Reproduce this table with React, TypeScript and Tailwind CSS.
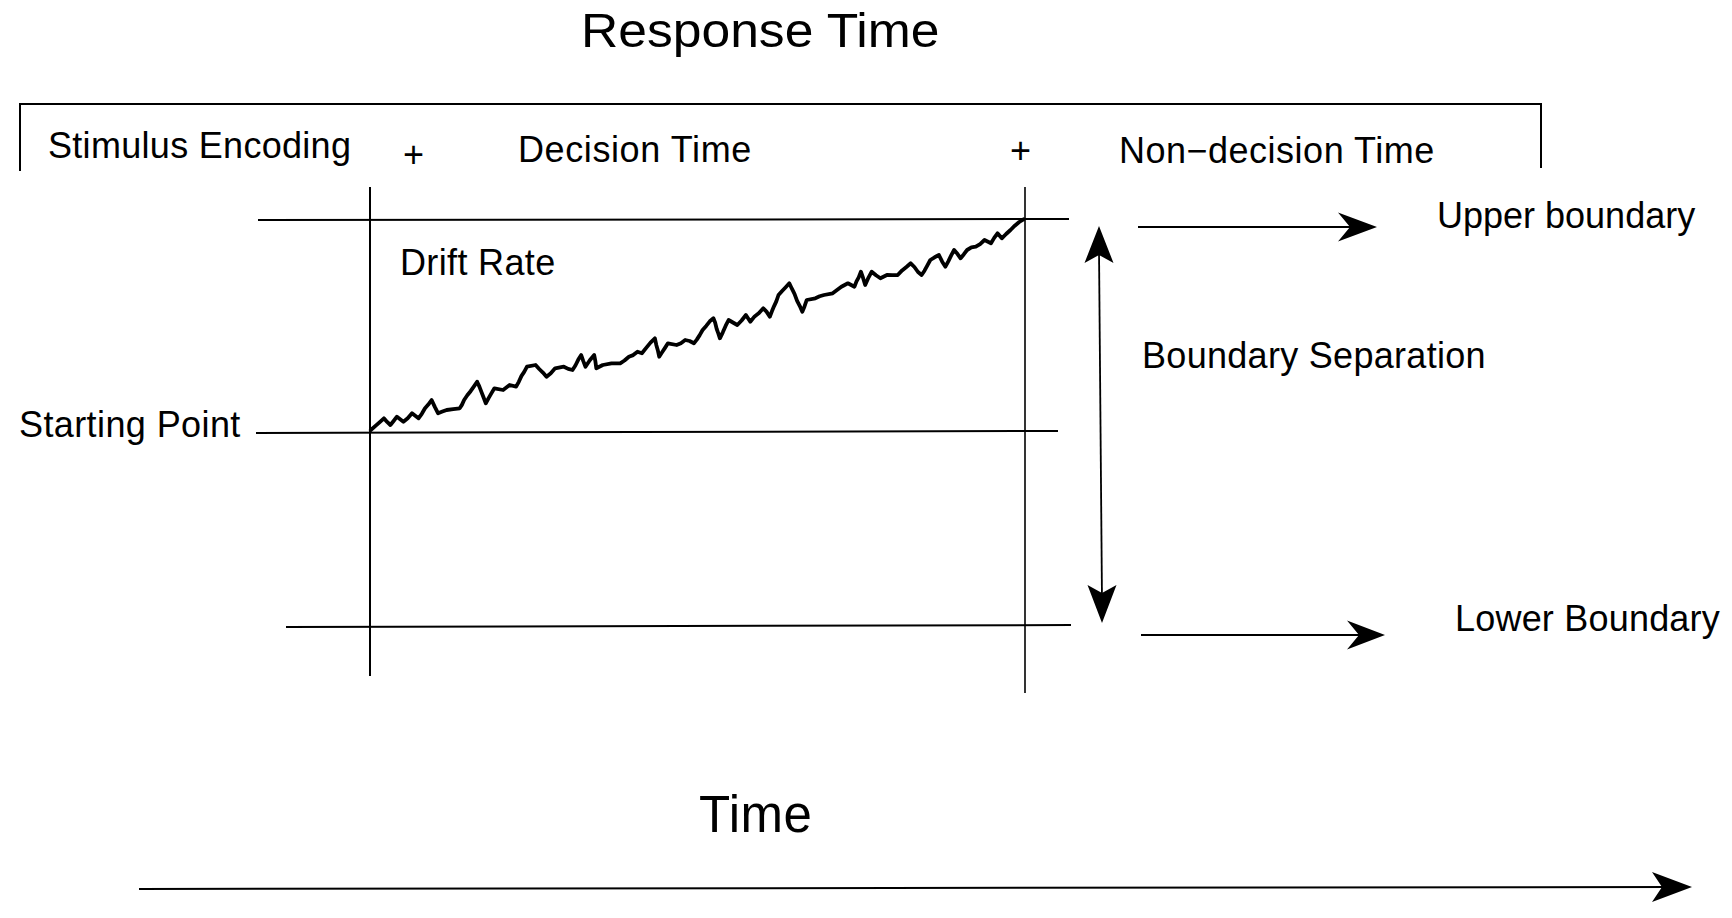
import React from "react";

// hand-traced drift path (zoom coords), mapped to page coords below
const raw: [number, number][] = [
  [25, 690], [55, 655], [70, 675], [85, 650], [100, 665], [120, 640], [135, 655], [165, 600],
  [180, 640], [200, 630], [230, 625], [240, 600], [270, 545], [290, 610], [310, 565], [330, 570],
  [345, 555], [360, 560], [385, 500], [405, 495], [430, 530], [450, 505], [470, 500], [490, 510],
  [510, 465], [520, 500], [540, 465], [545, 505], [560, 495], [580, 490], [600, 490], [620, 470],
  [640, 455], [650, 460], [680, 415], [690, 470], [710, 430], [730, 435], [750, 420], [770, 430],
  [790, 390], [815, 355], [830, 415], [850, 360], [870, 375], [890, 345], [900, 365], [930, 325],
  [945, 350], [965, 285], [990, 250], [1020, 335], [1030, 300], [1050, 295], [1070, 285],
  [1090, 280], [1110, 260], [1125, 250], [1140, 260], [1155, 215], [1165, 255], [1180, 215],
  [1200, 235], [1215, 225], [1240, 225], [1270, 190], [1295, 225], [1315, 180], [1335, 165],
  [1350, 200], [1370, 150], [1385, 175], [1400, 150], [1420, 140], [1440, 120], [1455, 130],
  [1470, 100], [1480, 115], [1500, 90], [1530, 58],
];

function mulberry32(seed: number) {
  return () => {
    seed |= 0;
    seed = (seed + 0x6d2b79f5) | 0;
    let t = Math.imul(seed ^ (seed >>> 15), 1 | seed);
    t = (t + Math.imul(t ^ (t >>> 7), 61 | t)) ^ t;
    return ((t ^ (t >>> 14)) >>> 0) / 4294967296;
  };
}

function buildWalk() {
  const rand = mulberry32(11);
  const pts = raw.map(([x, y]) => [360 + x / 2.306, 200 + y / 3]);
  const out: string[] = [];
  for (let i = 0; i < pts.length - 1; i++) {
    const [ax, ay] = pts[i];
    const [bx, by] = pts[i + 1];
    const steps = Math.max(1, Math.round(Math.hypot(bx - ax, by - ay) / 6));
    for (let s = 0; s < steps; s++) {
      const t = s / steps;
      const j = s > 0 ? (rand() - 0.5) * 2 : 0;
      out.push(`${(ax + (bx - ax) * t).toFixed(1)},${(ay + (by - ay) * t + j).toFixed(1)}`);
    }
  }
  const last = pts[pts.length - 1];
  out.push(`${last[0].toFixed(1)},${last[1].toFixed(1)}`);
  return "M" + out.join(" L");
}

const walk = buildWalk();

function headRight(tx: number, ty: number, len: number, half: number, notch: number) {
  return `${tx},${ty} ${tx - len},${ty - half} ${tx - len + notch},${ty} ${tx - len},${ty + half}`;
}

function headVert(tx: number, ty: number, len: number, half: number, notch: number, up: boolean) {
  const d = up ? 1 : -1;
  return `${tx},${ty} ${tx - half},${ty + d * len} ${tx},${ty + d * (len - notch)} ${tx + half},${ty + d * len}`;
}

function Label({ className, children }: { className: string; children: React.ReactNode }) {
  return <span className={`absolute whitespace-nowrap leading-none ${className}`}>{children}</span>;
}

export default function App() {
  return (
    <div className="relative w-[1732px] h-[918px] overflow-hidden bg-white text-black font-['Liberation_Sans',Arial,sans-serif]">
      <svg className="absolute inset-0" width={1732} height={918} viewBox="0 0 1732 918">
        <g stroke="#000" fill="none" strokeLinecap="butt">
          {/* response time bracket */}
          <polyline points="20,171 20,104 1541,104 1541,168" strokeWidth={2} />

          {/* boundaries */}
          <line x1={258} y1={220} x2={1069} y2={219} strokeWidth={2} />
          <line x1={256} y1={433} x2={1058} y2={431} strokeWidth={2} />
          <line x1={286} y1={627} x2={1071} y2={625} strokeWidth={2} />

          {/* decision window */}
          <line x1={370} y1={187} x2={370} y2={676} strokeWidth={2} />
          <line x1={1025} y1={187} x2={1025} y2={693} strokeWidth={1.6} />

          {/* separation shaft */}
          <line x1={1099} y1={250} x2={1102} y2={600} strokeWidth={1.8} />

          {/* boundary pointers */}
          <line x1={1138} y1={227} x2={1360} y2={227} strokeWidth={2} />
          <line x1={1141} y1={635} x2={1368} y2={635} strokeWidth={2} />

          {/* time axis */}
          <line x1={139} y1={889} x2={1675} y2={887} strokeWidth={2} />

          <path d={walk} strokeWidth={3.8} strokeLinejoin="round" strokeLinecap="round" />
        </g>
        <g fill="#000">
          <polygon points={headRight(1377, 227, 39, 14.5, 12)} />
          <polygon points={headRight(1385, 635, 38, 14.5, 12)} />
          <polygon points={headRight(1692, 887, 40, 15, 10)} />
          <polygon points={headVert(1099, 226, 37, 14.5, 8, true)} />
          <polygon points={headVert(1102, 623, 38, 14.5, 8, false)} />
        </g>
      </svg>

      <Label className="left-[581px] top-[7px] text-[48px] origin-left scale-x-[1.075]">Response Time</Label>

      <Label className="left-[48px] top-[128px] text-[36px] tracking-[0.3px]">Stimulus Encoding</Label>
      <Label className="left-[403px] top-[137px] text-[36px]">+</Label>
      <Label className="left-[518px] top-[132px] text-[36px] tracking-[0.6px]">Decision Time</Label>
      <Label className="left-[1010px] top-[133px] text-[36px]">+</Label>
      <Label className="left-[1119px] top-[133px] text-[36px] tracking-[0.5px]">Non−decision Time</Label>

      <Label className="left-[400px] top-[245px] text-[36px] tracking-[0.35px]">Drift Rate</Label>
      <Label className="left-[19px] top-[407px] text-[36px] tracking-[0.4px]">Starting Point</Label>

      <Label className="left-[1437px] top-[198px] text-[36px]">Upper boundary</Label>
      <Label className="left-[1142px] top-[338px] text-[36px] tracking-[0.3px]">Boundary Separation</Label>
      <Label className="left-[1455px] top-[601px] text-[36px] tracking-[0.2px]">Lower Boundary</Label>

      <Label className="left-[699px] top-[789px] text-[51px] tracking-[0.5px]">Time</Label>
    </div>
  );
}
